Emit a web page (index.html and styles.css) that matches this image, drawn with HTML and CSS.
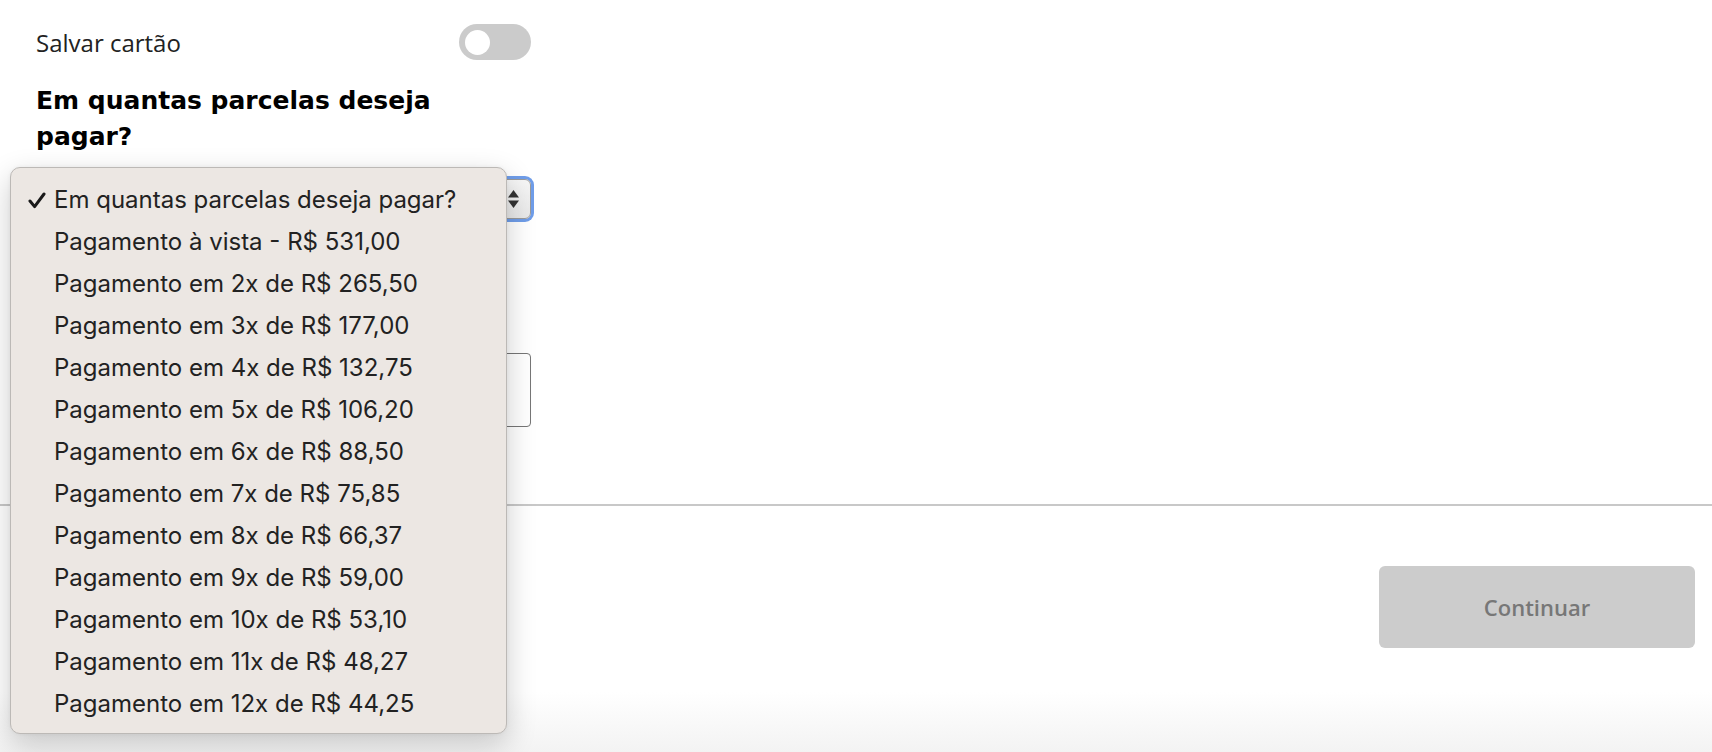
FILE: index.html
```html
<!DOCTYPE html>
<html lang="pt-BR">
<head>
  <meta charset="UTF-8">
  <meta name="viewport" content="width=device-width, initial-scale=1.0">
  <title>Pagamento</title>
  <link rel="stylesheet" href="styles.css">
</head>
<body>
  <div class="form-section">
    <div class="save-row">
      <span class="save-label">Salvar cartão</span>
      <span class="toggle"><span class="knob"></span></span>
    </div>

    <h3 class="installments-title">Em quantas parcelas deseja pagar?</h3>

    <!-- native select look, opened (its label is hidden by the menu) -->
    <div class="select-box">
      <svg class="select-arrows" width="13" height="22" viewBox="0 0 13 22">
        <path d="M6.5 2 L12 9.5 L1 9.5 Z" fill="#333"/>
        <path d="M6.5 20 L12 12.5 L1 12.5 Z" fill="#333"/>
      </svg>
    </div>

    <div class="text-field"></div>
  </div>

  <div class="footer">
    <button class="continue-btn" disabled>Continuar</button>
  </div>

  <div class="select-menu">
    <div class="menu-item checked">
      <svg class="check" width="18" height="17" viewBox="0 0 18 17">
        <path d="M2 9 L6.6 14.6 L16 2" fill="none" stroke="#1a1a1a" stroke-width="3" stroke-linecap="round" stroke-linejoin="round"/>
      </svg>
      Em quantas parcelas deseja pagar?
    </div>
    <div class="menu-item">Pagamento à vista - R$ 531,00</div>
    <div class="menu-item">Pagamento em 2x de R$ 265,50</div>
    <div class="menu-item">Pagamento em 3x de R$ 177,00</div>
    <div class="menu-item">Pagamento em 4x de R$ 132,75</div>
    <div class="menu-item">Pagamento em 5x de R$ 106,20</div>
    <div class="menu-item">Pagamento em 6x de R$ 88,50</div>
    <div class="menu-item">Pagamento em 7x de R$ 75,85</div>
    <div class="menu-item">Pagamento em 8x de R$ 66,37</div>
    <div class="menu-item">Pagamento em 9x de R$ 59,00</div>
    <div class="menu-item">Pagamento em 10x de R$ 53,10</div>
    <div class="menu-item">Pagamento em 11x de R$ 48,27</div>
    <div class="menu-item">Pagamento em 12x de R$ 44,25</div>
  </div>
</body>
</html>
```

FILE: styles.css
```css
body {
  margin: 0;
  padding: 0;
  font-family: 'Open Sans', sans-serif;
  color: #222;
  min-height: 100vh;
  background: linear-gradient(#fff calc(100% - 60px), #f3f3f3);
  position: relative;
}

.form-section {
  width: 495px;
  padding: 24px 0 77px 36px;
}

.save-row {
  display: flex;
  justify-content: space-between;
  align-items: center;
  height: 36px;
}

.save-label {
  font-size: 24px;
  color: #222;
}

.toggle {
  width: 72px;
  height: 36px;
  border-radius: 18px;
  background-color: #cbcbcb;
  display: flex;
  align-items: center;
  padding-left: 6px;
  box-sizing: border-box;
}

.knob {
  width: 25px;
  height: 25px;
  border-radius: 50%;
  background-color: #fff;
}

.installments-title {
  font-family: 'DejaVu Sans', sans-serif;
  font-weight: bold;
  font-size: 25px;
  line-height: 36px;
  color: #000;
  margin: 23px 0 24px;
  width: 420px;
}

.select-box {
  height: 40px;
  border: 1px solid #9a9a9a;
  border-radius: 6px;
  box-shadow: 0 0 0 3px #6f9de9;
  background: linear-gradient(#f6f6f6, #e8e8e8);
  display: flex;
  align-items: center;
  justify-content: flex-end;
  padding: 0 10px 0 12px;
  box-sizing: border-box;
}

.select-arrows {
  display: block;
}

.text-field {
  margin-top: 134px;
  height: 74px;
  border: 1px solid #767676;
  border-radius: 4px;
  box-sizing: border-box;
}

.footer {
  border-top: 2px solid #c8c8c8;
  display: flex;
  justify-content: flex-end;
  padding: 60px 17px 0 0;
}

.continue-btn {
  width: 316px;
  height: 82px;
  border: none;
  border-radius: 6px;
  background-color: #cccccc;
  color: #777;
  font-family: 'Open Sans', sans-serif;
  font-weight: 600;
  font-size: 22px;
}

.select-menu {
  position: absolute;
  left: 10px;
  top: 167px;
  width: 497px;
  box-sizing: border-box;
  padding: 11px 0 8px;
  background-color: #ece7e3;
  border: 1px solid #bcb9b6;
  border-radius: 10px;
  box-shadow: 0 10px 30px rgba(0, 0, 0, 0.2), 0 0 4px rgba(0, 0, 0, 0.05);
}

.menu-item {
  position: relative;
  height: 42px;
  line-height: 42px;
  padding-left: 43px;
  font-family: 'Inter', sans-serif;
  font-size: 24px;
  color: #222;
}

.check {
  position: absolute;
  left: 17px;
  top: 13px;
}
```
